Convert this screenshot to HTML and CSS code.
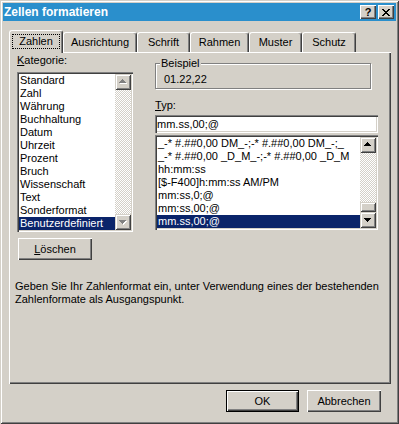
FILE: index.html
```html
<!DOCTYPE html>
<html lang="de">
<head>
    <meta charset="UTF-8">
    <meta name="viewport" content="width=device-width, initial-scale=1.0">
    <title>Zellen formatieren</title>
    <link rel="stylesheet" href="styles.css">
</head>
<body>
    <div class="window">
        <div class="titlebar">
            <span class="title">Zellen formatieren</span>
            <div class="caption-buttons">
                <button class="cap-btn help">?</button>
                <button class="cap-btn close">
                    <svg width="8" height="7" viewBox="0 0 8 7" shape-rendering="crispEdges">
                        <path d="M0 0h2v1H0zM6 0h2v1H6zM1 1h2v1H1zM5 1h2v1H5zM2 2h4v1H2zM3 3h2v1H3zM2 4h4v1H2zM1 5h2v1H1zM5 5h2v1H5zM0 6h2v1H0zM6 6h2v1H6z" fill="#000"/>
                    </svg>
                </button>
            </div>
        </div>

        <div class="tabs">
            <div class="tab active tab-zahlen"><span class="focus">Zahlen</span></div>
            <div class="tab tab-ausrichtung">Ausrichtung</div>
            <div class="tab tab-schrift">Schrift</div>
            <div class="tab tab-rahmen">Rahmen</div>
            <div class="tab tab-muster">Muster</div>
            <div class="tab tab-schutz">Schutz</div>
        </div>

        <div class="panel">
            <div class="columns">
                <div class="col-left">
                    <div class="label"><u>K</u>ategorie:</div>
                    <div class="listbox cat-list">
                        <ul class="items">
                            <li>Standard</li>
                            <li>Zahl</li>
                            <li>Währung</li>
                            <li>Buchhaltung</li>
                            <li>Datum</li>
                            <li>Uhrzeit</li>
                            <li>Prozent</li>
                            <li>Bruch</li>
                            <li>Wissenschaft</li>
                            <li>Text</li>
                            <li>Sonderformat</li>
                            <li class="selected">Benutzerdefiniert</li>
                        </ul>
                        <div class="scrollbar disabled">
                            <div class="arrow">
                                <svg width="16" height="16" viewBox="0 0 16 16" shape-rendering="crispEdges">
                                    <path class="shadow" d="M8 6h1v1H8zM7 7h3v1H7zM6 8h5v1H6zM5 9h7v1H5z"/>
                                    <path class="glyph" d="M7 5h1v1H7zM6 6h3v1H6zM5 7h5v1H5zM4 8h7v1H4z"/>
                                </svg>
                            </div>
                            <div class="track"></div>
                            <div class="arrow">
                                <svg width="16" height="16" viewBox="0 0 16 16" shape-rendering="crispEdges">
                                    <path class="shadow" d="M5 7h7v1H5zM6 8h5v1H6zM7 9h3v1H7zM8 10h1v1H8z"/>
                                    <path class="glyph" d="M4 6h7v1H4zM5 7h5v1H5zM6 8h3v1H6zM7 9h1v1H7z"/>
                                </svg>
                            </div>
                        </div>
                    </div>
                </div>

                <div class="col-right">
                    <fieldset class="group">
                        <legend>Beispiel</legend>
                        <div class="sample">01.22,22</div>
                    </fieldset>
                    <div class="label typ-label"><u>T</u>yp:</div>
                    <div class="textbox">mm.ss,00;@</div>
                    <div class="listbox typ-list">
                        <ul class="items">
                            <li>_-* #.##0,00 DM_-;-* #.##0,00 DM_-;_</li>
                            <li>_-* #.##0,00 _D_M_-;-* #.##0,00 _D_M</li>
                            <li>hh:mm:ss</li>
                            <li>[$-F400]h:mm:ss AM/PM</li>
                            <li>mm:ss,0;@</li>
                            <li>mm:ss,00;@</li>
                            <li class="selected">mm.ss,00;@</li>
                        </ul>
                        <div class="scrollbar">
                            <div class="arrow">
                                <svg width="16" height="16" viewBox="0 0 16 16" shape-rendering="crispEdges">
                                    <path class="glyph" d="M7 5h1v1H7zM6 6h3v1H6zM5 7h5v1H5zM4 8h7v1H4z"/>
                                </svg>
                            </div>
                            <div class="track"></div>
                            <div class="thumb"></div>
                            <div class="arrow">
                                <svg width="16" height="16" viewBox="0 0 16 16" shape-rendering="crispEdges">
                                    <path class="glyph" d="M4 6h7v1H4zM5 7h5v1H5zM6 8h3v1H6zM7 9h1v1H7z"/>
                                </svg>
                            </div>
                        </div>
                    </div>
                </div>
            </div>

            <button class="btn delete"><u>L</u>öschen</button>

            <p class="hint">Geben Sie Ihr Zahlenformat ein, unter Verwendung eines der bestehenden Zahlenformate als Ausgangspunkt.</p>
        </div>

        <div class="footer">
            <button class="btn default ok">OK</button>
            <button class="btn cancel">Abbrechen</button>
        </div>
    </div>
</body>
</html>
```

FILE: styles.css
```css
* {
    margin: 0;
    padding: 0;
    box-sizing: border-box;
}

:root {
    --face: #d4d0c8;
    --shadow: #808080;
    --dark: #404040;
    --light: #ffffff;
    --select: #0a246a;
    --caption: #2a8fcc;
}

body {
    width: 399px;
    height: 424px;
    overflow: hidden;
    background-color: var(--face);
    font-family: "Liberation Sans", Arial, sans-serif;
    font-size: 11px;
    color: #000;
}

button {
    font-family: inherit;
    font-size: 11px;
    color: #000;
    border: none;
    background-color: var(--face);
}

u {
    text-decoration: underline;
    text-underline-offset: 1px;
}

.window {
    width: 399px;
    height: 424px;
    padding: 3px;
    background-color: var(--face);
    box-shadow: inset 1px 1px var(--face), inset -1px -1px var(--dark),
                inset 2px 2px var(--light), inset -2px -2px var(--shadow);
}

/* title bar */
.titlebar {
    height: 18px;
    background-color: var(--caption);
    display: flex;
    align-items: center;
    justify-content: space-between;
    padding: 0 2px 0 1px;
}

.title {
    color: white;
    font-weight: bold;
    font-size: 12px;
    line-height: 14px;
}

.caption-buttons {
    display: flex;
    gap: 2px;
}

.cap-btn {
    width: 16px;
    height: 14px;
    display: flex;
    align-items: center;
    justify-content: center;
    box-shadow: inset 1px 1px var(--light), inset -1px -1px var(--dark),
                inset -2px -2px var(--shadow);
}

.cap-btn.help {
    font-weight: bold;
    font-size: 11px;
    line-height: 14px;
    padding-bottom: 1px;
}

.cap-btn.close svg {
    display: block;
    margin-left: -1px;
}

/* tabs */
.tabs {
    margin-top: 9px;
    height: 22px;
    padding-left: 6px;
    display: flex;
    align-items: flex-end;
}

.tab {
    height: 20px;
    text-align: center;
    line-height: 13px;
    padding-top: 3px;
    border-top: 1px solid var(--light);
    border-left: 1px solid var(--light);
    border-right: 1px solid var(--dark);
    border-radius: 3px 3px 0 0;
    box-shadow: inset -1px 0 var(--shadow);
}

.tab.active {
    height: 23px;
    margin-bottom: -1px;
    padding-top: 2px;
    position: relative;
    z-index: 1;
    background-color: var(--face);
}

.tab-zahlen { width: 54px; }
.tab-ausrichtung { width: 74px; }
.tab-schrift { width: 53px; }
.tab-rahmen { width: 59px; }
.tab-muster { width: 53px; }
.tab-schutz { width: 54px; }

.focus {
    display: block;
    height: 15px;
    margin: 1px 2px 0 2px;
    border: 1px dotted #000;
    line-height: 13px;
}

/* panel */
.panel {
    margin-left: 6px;
    width: 382px;
    height: 332px;
    padding: 2px 8px 0 8px;
    box-shadow: inset 1px 1px var(--light), inset -1px -1px var(--dark),
                inset -2px -2px var(--shadow);
}

.columns {
    display: flex;
}

.col-left {
    width: 116px;
}

.col-right {
    width: 223px;
    margin-left: 22px;
    padding-top: 3px;
}

.label {
    height: 13px;
    line-height: 13px;
    margin-bottom: 5px;
}

/* list boxes */
.listbox {
    display: flex;
    padding: 2px;
    background-color: white;
    box-shadow: inset 1px 1px var(--shadow), inset 2px 2px var(--dark),
                inset -1px -1px var(--light), inset -2px -2px var(--face);
}

.cat-list {
    height: 160px;
}

.typ-list {
    height: 95px;
    margin-top: 2px;
}

.items {
    list-style: none;
    flex: 1;
    min-width: 0;
    overflow: hidden;
}

.items li {
    height: 13px;
    line-height: 13px;
    padding-left: 1px;
    white-space: nowrap;
    overflow: hidden;
}

.items li.selected {
    background-color: var(--select);
    color: white;
}

.scrollbar {
    width: 16px;
    display: flex;
    flex-direction: column;
}

.arrow {
    width: 16px;
    height: 16px;
    background-color: var(--face);
    box-shadow: inset 1px 1px var(--face), inset -1px -1px var(--dark),
                inset 2px 2px var(--light), inset -2px -2px var(--shadow);
}

.arrow svg {
    display: block;
}

.arrow .glyph {
    fill: #000;
}

.arrow .shadow {
    fill: var(--light);
}

.scrollbar.disabled .glyph {
    fill: var(--shadow);
}

.track {
    flex: 1;
    background-image: conic-gradient(var(--light) 25%, var(--face) 0 50%, var(--light) 0 75%, var(--face) 0);
    background-size: 2px 2px;
}

.thumb {
    height: 10px;
    background-color: var(--face);
    box-shadow: inset 1px 1px var(--face), inset -1px -1px var(--dark),
                inset 2px 2px var(--light), inset -2px -2px var(--shadow);
}

/* sample group */
.group {
    width: 216px;
    border: 1px solid var(--shadow);
    padding: 3px 7px 2px 7px;
    box-shadow: inset 1px 1px var(--light), 1px 1px var(--light);
}

.group legend {
    margin-left: -3px;
    padding: 0 1px;
    line-height: 13px;
    background-color: var(--face);
}

.sample {
    line-height: 13px;
    padding-left: 1px;
}

.typ-label {
    margin-top: 10px;
    margin-bottom: 3px;
}

.textbox {
    height: 18px;
    padding: 2px 2px 0 2px;
    line-height: 14px;
    background-color: white;
    box-shadow: inset 1px 1px var(--shadow), inset 2px 2px var(--dark),
                inset -1px -1px var(--light), inset -2px -2px var(--face);
}

/* buttons */
.btn {
    height: 22px;
    text-align: center;
    box-shadow: inset 1px 1px var(--light), inset -1px -1px var(--dark),
                inset -2px -2px var(--shadow);
}

.btn.default {
    border: 1px solid #000;
}

.delete {
    display: block;
    width: 74px;
    margin-top: 6px;
    margin-left: 1px;
}

.hint {
    margin-top: 20px;
    margin-left: -2px;
    line-height: 13px;
}

.footer {
    margin-top: 6px;
    display: flex;
    justify-content: flex-end;
    gap: 8px;
    padding-right: 15px;
}

.ok { width: 73px; }
.cancel { width: 74px; }
```
